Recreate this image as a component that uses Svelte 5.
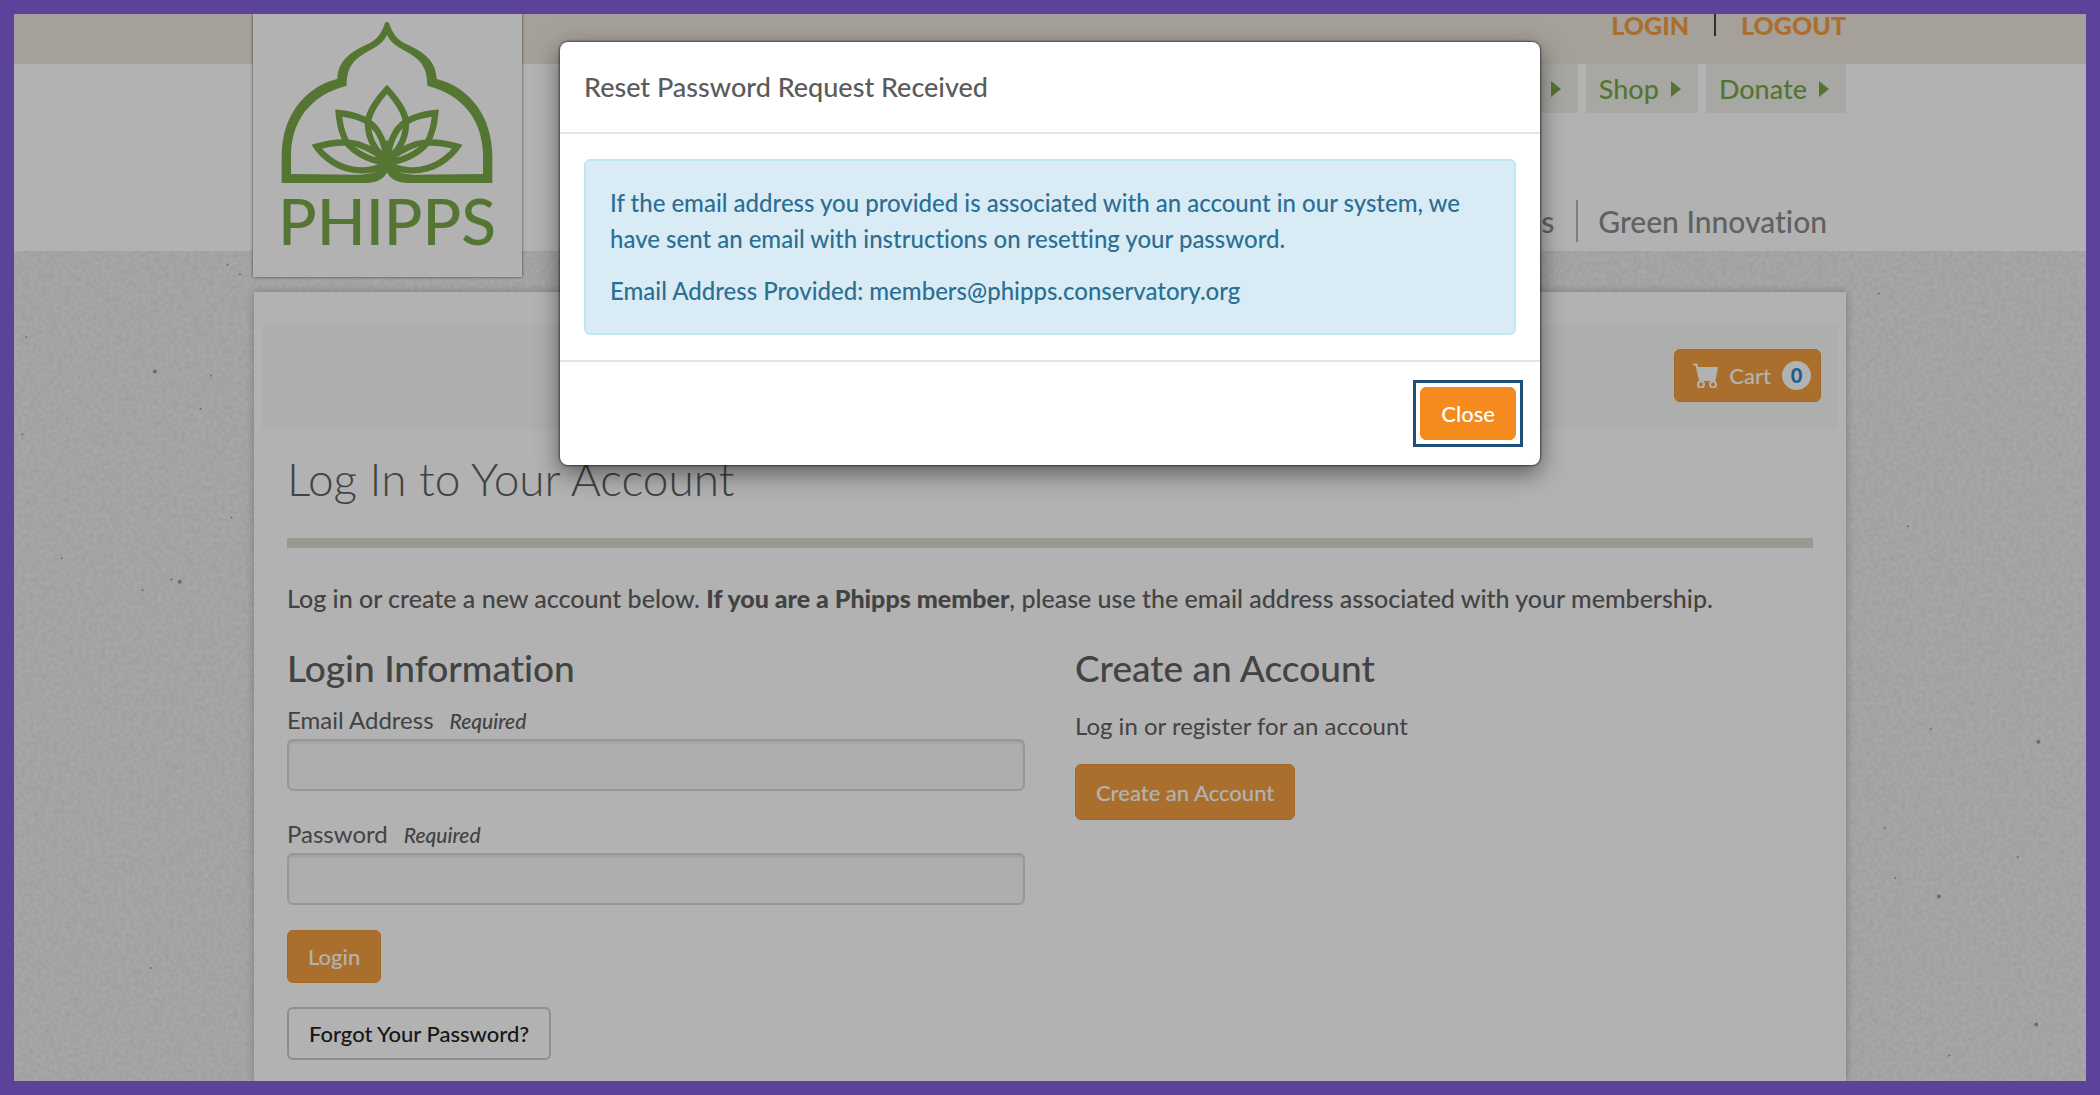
<script>
  let email    = $state('');
  let password = $state('');
  let showModal = $state(true);

  const cartCount = 0;
  const sentTo = 'members@phipps.conservatory.org';

  // flecks in the paper background: x %, y %, radius
  const flecks = [
    [0.6, 30.3, 1], [6.8, 33.5, 2], [9.5, 33.9, 1], [9, 37, 1], [0.4, 39.4, 1],
    [10.3, 23.5, 1], [10.5, 47.2, 1], [2.3, 51, 1], [7.6, 53, 1], [8, 53.2, 2],
    [6.2, 54, 1], [6.6, 89.4, 1], [10.9, 24.4, 1], [90, 26.2, 1], [91.4, 48, 1],
    [92.5, 67, 1], [97.7, 68.2, 2], [90.3, 76.3, 1], [96.7, 79, 1], [90.8, 81, 1],
    [92.9, 82.7, 2], [97.6, 94.7, 2], [93.4, 97.6, 1]
  ];
</script>

<svelte:head>
  <title>Log In to Your Account</title>
</svelte:head>

<!-- Right half of the arch and lotus, mirrored for the left -->
{#snippet half()}
  <path fill="currentColor" d="M440 67L446 67C458 100 470 120 500 133C555 158 588 185 590 237C690 262 757 350 757 470L757 549L500 549C465 547 448 533 441 517L440 490C470 518 490 522 520 524L729 522L729 460C725 360 670 285 562 257C562 205 545 180 500 155C465 138 450 125 440 103Z" />
  <g fill="none" stroke="currentColor" stroke-width="19" stroke-miterlimit="8">
    <path d="M441 485C475 450 497 420 498 375C500 350 480 310 441 268L436 262" />
    <path d="M441 490C443 455 450 425 468 395C490 360 530 345 586 339C584 360 580 385 572 405C560 450 500 480 441 490Z" />
    <path d="M441 490C460 465 490 445 530 432C560 425 600 425 652 440C635 465 600 495 560 505C530 515 480 515 441 490Z" />
  </g>
  <path fill="currentColor" d="M440 418L456 448L466 470L462 502L440 520Z" />
{/snippet}

<div class="page">
  <svg class="paper" aria-hidden="true">
    <filter id="grain">
      <feTurbulence type="fractalNoise" baseFrequency="0.25" numOctaves="3" seed="4" />
      <feColorMatrix values="0 0 0 0 0  0 0 0 0 0  0 0 0 0 0  0.1 0 0 0 -0.03" />
    </filter>
    <rect width="100%" height="100%" filter="url(#grain)" />
    {#each flecks as [x, y, r]}
      <circle cx="{x}%" cy="{y}%" {r} />
    {/each}
  </svg>

  <header>
    <div class="strip">
      <nav class="wrap account">
        <a href="#login">LOGIN</a>
        <a href="#logout">LOGOUT</a>
      </nav>
    </div>
    <div class="masthead">
      <div class="wrap menus">
        <nav class="quick">
          <a href="#visit" aria-label="Visit"><span class="arrow"></span></a>
          <a href="#shop">Shop <span class="arrow"></span></a>
          <a href="#donate">Donate <span class="arrow"></span></a>
        </nav>
        <nav class="main-nav">
          <a href="#programs">s</a>
          <a href="#green">Green Innovation</a>
        </nav>
      </div>
    </div>
    <div class="wrap logo-row">
      <a class="logo" href="#home" aria-label="Phipps">
        <svg viewBox="39 42 807 789">
          {@render half()}
          <g transform="matrix(-1 0 0 1 882 0)">{@render half()}</g>
          <text x="441" y="735" text-anchor="middle">PHIPPS</text>
        </svg>
      </a>
    </div>
  </header>

  <main class="wrap panel">
    <div class="cart-bar">
      <button class="btn cart">
        <svg viewBox="0 0 25 25" width="25" height="25" aria-hidden="true">
          <path fill="none" stroke="currentColor" stroke-width="2" d="M0 1.5H3.4L7.4 19" />
          <path fill="currentColor" d="M4 4H25L22.4 18H7Z" />
          <circle cx="8" cy="21.5" r="3" />
          <circle cx="20" cy="21.5" r="3" />
        </svg>
        <span>Cart</span>
        <span class="badge">{cartCount}</span>
      </button>
    </div>

    <div class="content">
      <h1>Log In to Your Account</h1>
      <p class="intro">Log in or create a new account below. <strong>If you are a Phipps member</strong>, please use the email address associated with your membership.</p>

      <div class="columns">
        <form onsubmit={e => e.preventDefault()}>
          <h2>Login Information</h2>
          <div class="field">
            <label for="email">Email Address <em>Required</em></label>
            <input id="email" type="email" bind:value={email}>
          </div>
          <div class="field">
            <label for="password">Password <em>Required</em></label>
            <input id="password" type="password" bind:value={password}>
          </div>
          <button class="btn" type="submit">Login</button>
          <button class="btn outline" type="button">Forgot Your Password?</button>
        </form>

        <section>
          <h2>Create an Account</h2>
          <p class="register">Log in or register for an account</p>
          <button class="btn tall">Create an Account</button>
        </section>
      </div>
    </div>
  </main>

  {#if showModal}
    <div class="backdrop">
      <div class="modal" role="dialog" aria-modal="true" aria-labelledby="modal-title">
        <div class="modal-head">
          <h3 id="modal-title">Reset Password Request Received</h3>
        </div>
        <div class="modal-body">
          <div class="alert">
            <p>If the email address you provided is associated with an account in our system, we have sent an email with instructions on resetting your password.</p>
            <p>Email Address Provided: {sentTo}</p>
          </div>
        </div>
        <div class="modal-foot">
          <button class="btn close" onclick={() => (showModal = false)}>Close</button>
        </div>
      </div>
    </div>
  {/if}
</div>

<style>
  .page {
    position: relative;
    display: flex;
    flex-direction: column;
    height: 100vh;
    box-sizing: border-box;
    border: 14px solid #5c429a;
    background: #efefef;
    overflow: hidden;
    font-family: Lato, "Open Sans", sans-serif;
    font-size: 24px;
    font-variant-ligatures: none;
    color: #606060;
  }
  .paper {
    position: absolute;
    inset: 0;
    width: 100%;
    height: 100%;
    fill: #9a9a9a;
  }
  .wrap {
    width: 100%;
    max-width: 1592px;
    margin: 0 auto;
    box-sizing: border-box;
  }
  h1, h2, h3, p { margin: 0; }
  a { text-decoration: none; }

  /* ── Header ── */
  header { position: relative; z-index: 1; }
  .strip {
    height: 50px;
    background: #ece6db;
  }
  .account {
    display: flex;
    justify-content: flex-end;
  }
  .account a {
    color: #f49f3f;
    font-size: 25px;
    font-weight: 900;
    line-height: 22px;
  }
  .account a + a {
    margin-left: 25px;
    padding-left: 25px;
    border-left: 2px solid #444;
  }
  .masthead {
    height: 187px;
    background: #fff;
  }
  .menus {
    display: flex;
    flex-direction: column;
    justify-content: space-between;
    align-items: flex-end;
    height: 100%;
  }
  .quick {
    display: flex;
    gap: 8px;
  }
  .quick a {
    display: flex;
    align-items: center;
    gap: 12px;
    height: 49px;
    padding: 0 17px 0 13px;
    background: #f0f0ea;
    color: #79a848;
    font-size: 27px;
    font-weight: 500;
  }
  .arrow {
    border: solid transparent;
    border-width: 8px 0 8px 10px;
    border-left-color: #79a848;
  }
  .main-nav {
    display: flex;
    padding: 0 19px 9px 0;
  }
  .main-nav a {
    color: #8c8c8c;
    font-size: 30px;
    font-weight: 500;
    line-height: 42px;
  }
  .main-nav a + a {
    margin-left: 22px;
    padding-left: 20px;
    border-left: 2px solid #b5b5b5;
  }
  .logo-row {
    position: absolute;
    inset: 0 0 auto;
  }
  .logo {
    display: block;
    width: 269px;
    margin-left: -1px;
    background: #fff;
    box-shadow: 0 0 3px rgba(0, 0, 0, 0.6);
    color: #7aa84a;
  }
  .logo svg { display: block; }
  .logo text {
    font-size: 192px;
    font-weight: 500;
    fill: currentColor;
  }

  /* ── Panel ── */
  .panel {
    position: relative;
    flex: 1;
    margin-top: 41px;
    padding: 33px 8px 0;
    background: #fff;
    box-shadow: 0 0 8px rgba(0, 0, 0, 0.25);
  }
  .cart-bar {
    display: flex;
    justify-content: flex-end;
    align-items: flex-start;
    height: 104px;
    padding: 24px 17px 0;
    box-sizing: border-box;
    background: #f9f9f9;
  }
  .btn {
    display: block;
    height: 53px;
    padding: 0 20px;
    border: 1px solid #ee9636;
    border-radius: 6px;
    background: #f49f3f;
    color: #fff;
    font-family: inherit;
    font-size: 22px;
    font-weight: 500;
    cursor: pointer;
  }
  .cart {
    display: flex;
    align-items: center;
    gap: 11px;
    padding: 0 9px 0 18px;
  }
  .cart circle {
    fill: #f49f3f;
    stroke: currentColor;
    stroke-width: 2;
  }
  .badge {
    width: 29px;
    border-radius: 50%;
    background: #fff;
    color: #2f83c8;
    font-size: 20px;
    font-weight: 900;
    line-height: 29px;
  }
  .content { padding: 20px 25px 0; }
  h1 {
    padding-bottom: 29px;
    border-bottom: 10px solid #dcdcd2;
    color: #606060;
    font-size: 46px;
    font-weight: 300;
    line-height: 60px;
  }
  .intro {
    margin-top: 32px;
    font-size: 25px;
    font-weight: 500;
    line-height: 36px;
  }
  .intro strong { font-weight: 900; }
  .columns {
    display: grid;
    grid-template-columns: 738px 1fr;
    gap: 50px;
    margin-top: 30px;
  }
  h2 {
    margin-bottom: 12px;
    font-size: 37px;
    font-weight: 500;
    line-height: 44px;
  }
  .field { margin-bottom: 25px; }
  label {
    display: flex;
    align-items: baseline;
    gap: 16px;
    line-height: 36px;
  }
  label em {
    font-size: 21px;
    font-weight: 500;
  }
  input {
    display: block;
    width: 100%;
    height: 52px;
    padding: 0 16px;
    box-sizing: border-box;
    border: 2px solid #d8d8d8;
    border-radius: 6px;
    background: #f9f9f9;
    box-shadow: inset 0 2px 2px rgba(0, 0, 0, 0.08);
    font: inherit;
  }
  .outline {
    margin-top: 24px;
    border: 2px solid #ccc;
    background: #fff;
    color: #222;
  }
  .register {
    margin-bottom: 20px;
    padding-top: 6px;
    line-height: 36px;
  }
  .tall { height: 56px; }

  /* ── Modal ── */
  .backdrop {
    position: absolute;
    inset: 0;
    z-index: 2;
    padding-top: 28px;
    background: rgba(0, 0, 0, 0.3);
  }
  .modal {
    max-width: 980px;
    margin: 0 auto;
    border-radius: 8px;
    background: #fff;
    box-shadow: 0 0 2px 1px rgba(0, 0, 0, 0.5), 0 8px 24px rgba(0, 0, 0, 0.5);
  }
  .modal-head {
    padding: 24px;
    border-bottom: 2px solid #e5e5e5;
  }
  h3 {
    color: #5b5b5b;
    font-size: 27px;
    font-weight: 500;
    line-height: 42px;
  }
  .modal-body { padding: 25px 24px; }
  .alert {
    padding: 24px;
    border: 2px solid #bce8f1;
    border-radius: 6px;
    background: #d9ecf6;
    color: #2b6f93;
    font-weight: 500;
    line-height: 36px;
  }
  .alert p + p { margin-top: 16px; }
  .modal-foot {
    display: flex;
    justify-content: flex-end;
    padding: 25px 24px;
    border-top: 2px solid #e5e5e5;
  }
  .close {
    position: relative;
    border-color: #f58a1f;
    background: #f58a1f;
    outline: none;
  }
  /* square focus ring round the rounded button */
  .close::after {
    content: '';
    position: absolute;
    inset: -8px;
    border: 3px solid #1f4e79;
  }
</style>
